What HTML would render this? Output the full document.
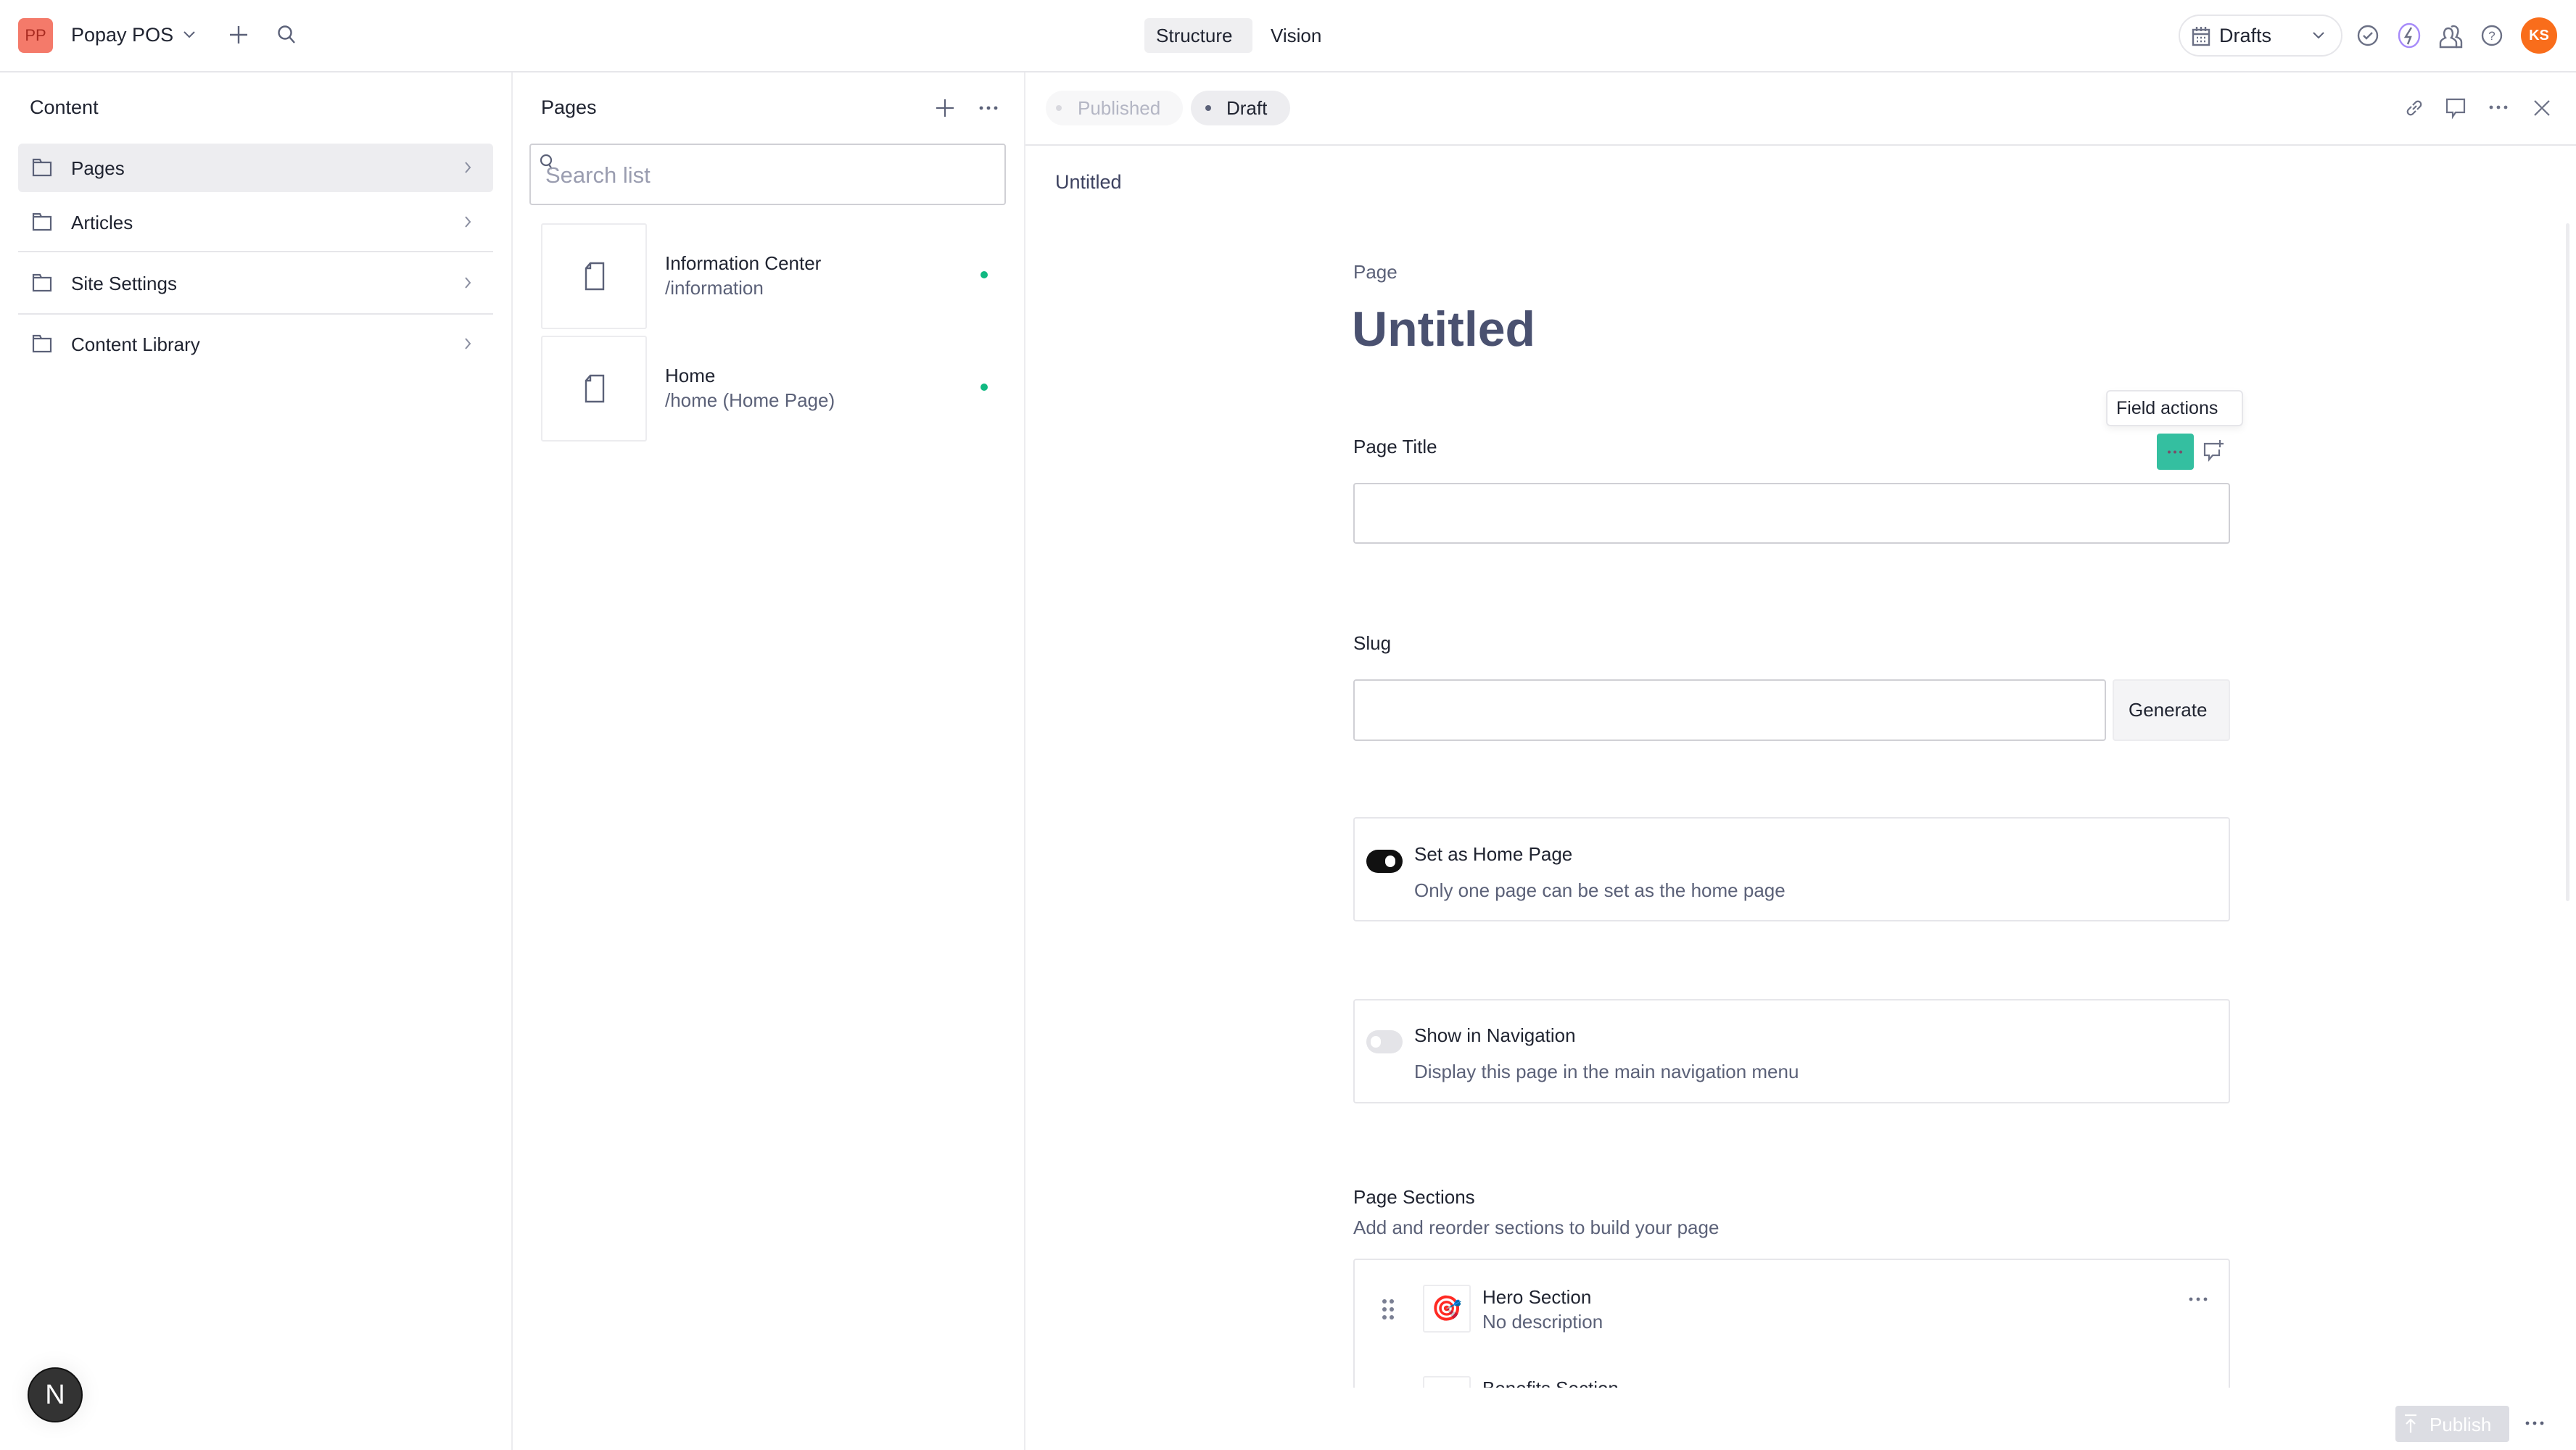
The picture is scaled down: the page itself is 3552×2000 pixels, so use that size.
<!DOCTYPE html>
<html><head><meta charset="utf-8">
<style>
*{box-sizing:border-box;margin:0;padding:0}
body{width:3552px;height:2000px;position:relative;overflow:hidden;background:#fff;font-family:"Liberation Sans",sans-serif;color:#1f2330;font-size:26px}
.a{position:absolute}
.t{position:absolute;white-space:nowrap;line-height:1}
.sec{color:#5b6178}
svg{position:absolute;overflow:visible}
</style></head><body>
<!-- top bar -->
<div class="a" style="left:0;top:98px;width:3552px;height:2px;background:#e6e6ea"></div>
<div class="a" style="left:25px;top:25px;width:48px;height:48px;border-radius:8px;background:#f47a6a;color:#a82b20;font-size:22px;line-height:48px;text-align:center">PP</div>
<div class="t" style="left:98px;top:35px;font-size:27px">Popay POS</div>
<svg style="left:252px;top:42px" width="18" height="12"><path d="M2 2l7 7 7-7" fill="none" stroke="#5b6178" stroke-width="2"/></svg>
<svg style="left:316px;top:35px" width="26" height="26"><path d="M13 1v24M1 13h24" stroke="#5b6178" stroke-width="2.4"/></svg>
<svg style="left:382px;top:34px" width="28" height="30"><circle cx="11" cy="11" r="8.5" fill="none" stroke="#5b6178" stroke-width="2.4"/><path d="M17 17l7 8" stroke="#5b6178" stroke-width="2.4"/></svg>
<div class="a" style="left:1578px;top:25px;width:149px;height:48px;border-radius:6px;background:#efeff1"></div>
<div class="t" style="left:1594px;top:36px;font-size:26px">Structure</div>
<div class="t" style="left:1752px;top:36px;font-size:26px">Vision</div>
<div class="a" style="left:3004px;top:20px;width:226px;height:58px;border-radius:29px;border:2px solid #e6e6ea"></div>
<svg style="left:3022px;top:36px" width="26" height="28"><rect x="2" y="5" width="22" height="21" fill="none" stroke="#6b7085" stroke-width="2.4"/><path d="M2 11h22M7 1v6M13 1v6M19 1v6" stroke="#6b7085" stroke-width="2.4"/><path d="M7 16h2M12 16h2M17 16h2M7 21h2M12 21h2M17 21h2" stroke="#6b7085" stroke-width="2.4"/></svg>
<div class="t" style="left:3060px;top:36px;font-size:27px">Drafts</div>
<svg style="left:3188px;top:43px" width="18" height="12"><path d="M2 2l7 7 7-7" fill="none" stroke="#5b6178" stroke-width="2"/></svg>
<svg style="left:3250px;top:34px" width="30" height="30"><circle cx="15" cy="15" r="13" fill="none" stroke="#6b7085" stroke-width="2.4"/><path d="M9 15l4 4 8-8" fill="none" stroke="#6b7085" stroke-width="2.4"/></svg>
<svg style="left:3306px;top:31px" width="32" height="36"><ellipse cx="16" cy="18" rx="14" ry="16" fill="none" stroke="#a78bfa" stroke-width="2.4"/><path d="M19 7l-8 13h7l-4 10" fill="none" stroke="#6b7085" stroke-width="2.4"/></svg>
<svg style="left:3363px;top:33px" width="32" height="34"><path d="M2 32v-6c0-4 5-6 7-7-3-3-3-13 4-13s7 10 4 13c2 1 7 3 7 7v6z" fill="none" stroke="#6b7085" stroke-width="2.4"/><path d="M17 4c5-3 11 1 9 9-1 2-1 4-2 5 3 1 7 3 7 7v7h-7" fill="none" stroke="#6b7085" stroke-width="2.4"/></svg>
<svg style="left:3421px;top:34px" width="30" height="30"><circle cx="15" cy="15" r="13" fill="none" stroke="#6b7085" stroke-width="2.4"/><text x="15" y="21" font-size="17" text-anchor="middle" fill="#6b7085" font-family="Liberation Sans">?</text></svg>
<div class="a" style="left:3476px;top:24px;width:50px;height:50px;border-radius:50%;background:#f96d1b;color:#fff;font-size:20px;font-weight:bold;line-height:50px;text-align:center">KS</div>

<!-- column dividers -->
<div class="a" style="left:705px;top:100px;width:2px;height:1900px;background:#ececef"></div>
<div class="a" style="left:1412px;top:100px;width:2px;height:1900px;background:#ececef"></div>

<!-- sidebar -->
<div class="t" style="left:41px;top:135px;font-size:27px">Content</div>
<div class="a" style="left:25px;top:198px;width:655px;height:67px;border-radius:6px;background:#ededf0"></div>
<div class="a" style="left:25px;top:346px;width:655px;height:2px;background:#e6e6ea"></div>
<div class="a" style="left:25px;top:432px;width:655px;height:2px;background:#e6e6ea"></div>
<div id="side"></div>

<!-- pages panel -->
<div class="t" style="left:746px;top:135px;font-size:27px">Pages</div>
<svg style="left:1290px;top:136px" width="26" height="26"><path d="M13 1v24M1 13h24" stroke="#5b6178" stroke-width="2.2"/></svg>
<svg style="left:1350px;top:146px" width="26" height="6"><circle cx="3" cy="3" r="2.4" fill="#5b6178"/><circle cx="13" cy="3" r="2.4" fill="#5b6178"/><circle cx="23" cy="3" r="2.4" fill="#5b6178"/></svg>
<div class="a" style="left:730px;top:198px;width:657px;height:85px;border:2px solid #d0d0d5;border-radius:4px"></div>
<svg style="left:744px;top:212px" width="20" height="24"><circle cx="9" cy="9" r="7" fill="none" stroke="#5b6178" stroke-width="2.2"/><path d="M13 15l4 6" stroke="#5b6178" stroke-width="2.2"/></svg>
<div class="t" style="left:752px;top:226px;font-size:31px;color:#9a9db0">Search list</div>
<div class="a" style="left:746px;top:308px;width:146px;height:146px;border:2px solid #ececef;border-radius:3px"></div>
<div class="a" style="left:746px;top:463px;width:146px;height:146px;border:2px solid #ececef;border-radius:3px"></div>
<svg style="left:805px;top:361px" width="30" height="40"><path d="M9 2h18v36H3V9z M3 9h6V2" fill="none" stroke="#5b6178" stroke-width="2.4"/></svg>
<svg style="left:805px;top:516px" width="30" height="40"><path d="M9 2h18v36H3V9z M3 9h6V2" fill="none" stroke="#5b6178" stroke-width="2.4"/></svg>
<div class="t" style="left:917px;top:350px;font-size:26px">Information Center</div>
<div class="t sec" style="left:917px;top:384px;font-size:26px">/information</div>
<div class="t" style="left:917px;top:505px;font-size:26px">Home</div>
<div class="t sec" style="left:917px;top:539px;font-size:26px">/home (Home Page)</div>
<div class="a" style="left:1352px;top:374px;width:10px;height:10px;border-radius:50%;background:#10b981"></div>
<div class="a" style="left:1352px;top:529px;width:10px;height:10px;border-radius:50%;background:#10b981"></div>

<!-- right panel header -->
<div class="a" style="left:1414px;top:199px;width:2138px;height:2px;background:#e6e6ea"></div>
<div class="a" style="left:1442px;top:125px;width:189px;height:48px;border-radius:24px;background:#f7f7f8"></div>
<div class="a" style="left:1456px;top:145px;width:8px;height:8px;border-radius:50%;background:#d8d8de"></div>
<div class="t" style="left:1486px;top:136px;font-size:26px;color:#b4b6c4">Published</div>
<div class="a" style="left:1642px;top:125px;width:137px;height:48px;border-radius:24px;background:#ededf0"></div>
<div class="a" style="left:1662px;top:145px;width:8px;height:8px;border-radius:50%;background:#5b6178"></div>
<div class="t" style="left:1691px;top:136px;font-size:26px">Draft</div>
<svg style="left:3316px;top:136px" width="26" height="26"><path d="M11 15l5-5M9 11l-4 4a4 4 0 006 6l4-4M17 15l4-4a4 4 0 00-6-6l-4 4" fill="none" stroke="#6b7085" stroke-width="2.2"/></svg>
<svg style="left:3372px;top:135px" width="28" height="30"><path d="M2 2h24v18H14l-4 6v-6H2z" fill="none" stroke="#6b7085" stroke-width="2.2"/></svg>
<svg style="left:3432px;top:145px" width="26" height="6"><circle cx="3" cy="3" r="2.4" fill="#6b7085"/><circle cx="13" cy="3" r="2.4" fill="#6b7085"/><circle cx="23" cy="3" r="2.4" fill="#6b7085"/></svg>
<svg style="left:3493px;top:137px" width="24" height="24"><path d="M2 2l20 20M22 2L2 22" stroke="#6b7085" stroke-width="2.2"/></svg>
<div class="t" style="left:1455px;top:238px;font-size:27px;color:#3d4260">Untitled</div>
<div class="a" style="left:3538px;top:308px;width:5px;height:935px;background:#ececef;border-radius:3px"></div>

<!-- form -->
<div class="t sec" style="left:1866px;top:362px;font-size:26px">Page</div>
<div class="t" style="left:1864px;top:420px;font-size:68px;font-weight:bold;color:#4a5170">Untitled</div>
<div class="a" style="left:2904px;top:538px;width:189px;height:50px;border:2px solid #e6e6ea;border-radius:6px;background:#fff;box-shadow:0 4px 10px rgba(0,0,0,.06)"></div>
<div class="t" style="left:2918px;top:551px;font-size:25px">Field actions</div>
<div class="a" style="left:2974px;top:598px;width:51px;height:50px;border-radius:4px;background:#34bfa0"></div>
<svg style="left:2988px;top:621px" width="22" height="5"><circle cx="3" cy="2.5" r="2" fill="#7a4d6a"/><circle cx="11" cy="2.5" r="2" fill="#7a4d6a"/><circle cx="19" cy="2.5" r="2" fill="#7a4d6a"/></svg>
<svg style="left:3038px;top:606px" width="30" height="32"><path d="M18 6H2v16h6v6l5-6h9V14" fill="none" stroke="#6b7085" stroke-width="2.2"/><path d="M23 1v10M18 6h10" stroke="#6b7085" stroke-width="2.2"/></svg>
<div class="t" style="left:1866px;top:603px;font-size:26px">Page Title</div>
<div class="a" style="left:1866px;top:666px;width:1209px;height:84px;border:2px solid #d0d0d5;border-radius:4px"></div>
<div class="t" style="left:1866px;top:874px;font-size:26px">Slug</div>
<div class="a" style="left:1866px;top:937px;width:1038px;height:85px;border:2px solid #d0d0d5;border-radius:4px"></div>
<div class="a" style="left:2913px;top:937px;width:162px;height:85px;border:2px solid #ececef;border-radius:4px;background:#f4f4f6"></div>
<div class="t" style="left:2935px;top:966px;font-size:26px">Generate</div>

<div class="a" style="left:1866px;top:1127px;width:1209px;height:144px;border:2px solid #e6e6ea;border-radius:4px"></div>
<div class="a" style="left:1884px;top:1172px;width:50px;height:32px;border-radius:16px;background:#111"></div>
<div class="a" style="left:1910px;top:1180px;width:14px;height:16px;border-radius:7px;background:#fff"></div>
<div class="t" style="left:1950px;top:1165px;font-size:26px">Set as Home Page</div>
<div class="t sec" style="left:1950px;top:1215px;font-size:26px">Only one page can be set as the home page</div>

<div class="a" style="left:1866px;top:1378px;width:1209px;height:144px;border:2px solid #e6e6ea;border-radius:4px"></div>
<div class="a" style="left:1884px;top:1421px;width:50px;height:32px;border-radius:16px;background:#e4e4e8"></div>
<div class="a" style="left:1890px;top:1429px;width:14px;height:16px;border-radius:7px;background:#fff"></div>
<div class="t" style="left:1950px;top:1415px;font-size:26px">Show in Navigation</div>
<div class="t sec" style="left:1950px;top:1465px;font-size:26px">Display this page in the main navigation menu</div>

<div class="t" style="left:1866px;top:1638px;font-size:26px">Page Sections</div>
<div class="t sec" style="left:1866px;top:1680px;font-size:26px">Add and reorder sections to build your page</div>
<div class="a" style="left:1866px;top:1736px;width:1209px;height:178px;overflow:hidden">
 <div class="a" style="left:0;top:0;width:1209px;height:400px;border:2px solid #e6e6ea;border-radius:4px"></div>
 <svg style="left:38px;top:55px" width="20" height="30"><g fill="#7a7f93"><circle cx="5" cy="4" r="3"/><circle cx="15" cy="4" r="3"/><circle cx="5" cy="15" r="3"/><circle cx="15" cy="15" r="3"/><circle cx="5" cy="26" r="3"/><circle cx="15" cy="26" r="3"/></g></svg>
 <div class="a" style="left:96px;top:36px;width:66px;height:66px;border:2px solid #ececef;border-radius:3px;text-align:center;line-height:62px;font-size:34px">🎯</div>
 <div class="t" style="left:178px;top:40px;font-size:26px">Hero Section</div>
 <div class="t sec" style="left:178px;top:74px;font-size:26px">No description</div>
 <svg style="left:1152px;top:53px" width="26" height="6"><circle cx="3" cy="3" r="2.4" fill="#6b7085"/><circle cx="13" cy="3" r="2.4" fill="#6b7085"/><circle cx="23" cy="3" r="2.4" fill="#6b7085"/></svg>
 <div class="a" style="left:96px;top:162px;width:66px;height:66px;border:2px solid #ececef;border-radius:3px"></div>
 <div class="t" style="left:178px;top:166px;font-size:26px">Benefits Section</div>
</div>

<!-- bottom -->
<div class="a" style="left:3303px;top:1939px;width:157px;height:50px;border-radius:4px;background:#dcdde3"></div>
<svg style="left:3314px;top:1950px" width="20" height="28"><path d="M2 2h16M10 26V8M4 14l6-6 6 6" fill="none" stroke="#fff" stroke-width="2.2"/></svg>
<div class="t" style="left:3350px;top:1952px;font-size:26px;color:#fff">Publish</div>
<svg style="left:3482px;top:1960px" width="26" height="6"><circle cx="3" cy="3" r="2.4" fill="#5b6178"/><circle cx="13" cy="3" r="2.4" fill="#5b6178"/><circle cx="23" cy="3" r="2.4" fill="#5b6178"/></svg>
<div class="a" style="left:38px;top:1886px;width:76px;height:76px;border-radius:50%;background:#333;border:2px solid #111;box-shadow:0 0 30px rgba(0,0,0,.08);color:#fff;font-size:38px;line-height:72px;text-align:center">N</div>

<!-- sidebar items -->
<svg style="left:44px;top:218px" width="28" height="26"><path d="M2 2h9l2 4h13v18H2z M2 6h11" fill="none" stroke="#5b6178" stroke-width="2.2"/></svg>
<div class="t" style="left:98px;top:219px;font-size:26px">Pages</div>
<svg style="left:640px;top:222px" width="10" height="18"><path d="M2 2l6 7-6 7" fill="none" stroke="#8a8ea0" stroke-width="2"/></svg>
<svg style="left:44px;top:293px" width="28" height="26"><path d="M2 2h9l2 4h13v18H2z M2 6h11" fill="none" stroke="#5b6178" stroke-width="2.2"/></svg>
<div class="t" style="left:98px;top:294px;font-size:26px">Articles</div>
<svg style="left:640px;top:297px" width="10" height="18"><path d="M2 2l6 7-6 7" fill="none" stroke="#8a8ea0" stroke-width="2"/></svg>
<svg style="left:44px;top:377px" width="28" height="26"><path d="M2 2h9l2 4h13v18H2z M2 6h11" fill="none" stroke="#5b6178" stroke-width="2.2"/></svg>
<div class="t" style="left:98px;top:378px;font-size:26px">Site Settings</div>
<svg style="left:640px;top:381px" width="10" height="18"><path d="M2 2l6 7-6 7" fill="none" stroke="#8a8ea0" stroke-width="2"/></svg>
<svg style="left:44px;top:461px" width="28" height="26"><path d="M2 2h9l2 4h13v18H2z M2 6h11" fill="none" stroke="#5b6178" stroke-width="2.2"/></svg>
<div class="t" style="left:98px;top:462px;font-size:26px">Content Library</div>
<svg style="left:640px;top:465px" width="10" height="18"><path d="M2 2l6 7-6 7" fill="none" stroke="#8a8ea0" stroke-width="2"/></svg>
</body></html>
